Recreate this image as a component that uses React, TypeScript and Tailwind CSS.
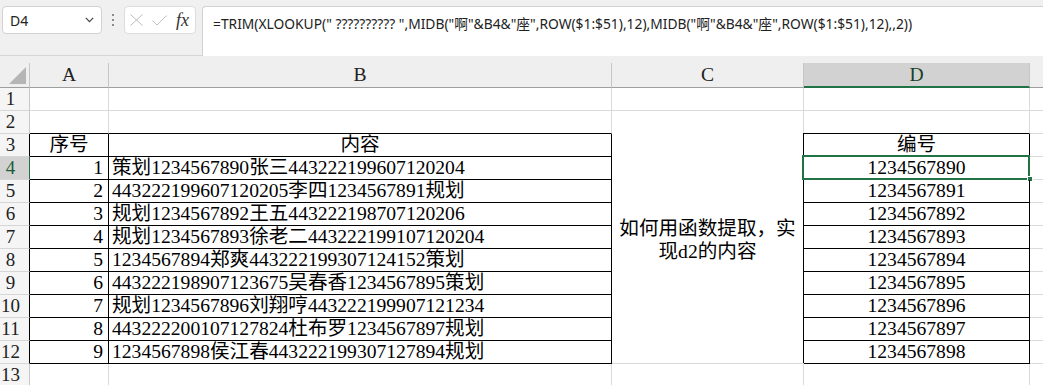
import React from "react";

const GRAY = "border-[#dadada]";
const cellFont = { fontFamily: '"Liberation Serif", "Noto Sans CJK SC", serif' };

const bTexts = [
  "策划1234567890张三443222199607120204",
  "443222199607120205李四1234567891规划",
  "规划1234567892王五443222198707120206",
  "规划1234567893徐老二443222199107120204",
  "1234567894郑爽443222199307124152策划",
  "443222198907123675吴春香1234567895策划",
  "规划1234567896刘翔哼443222199907121234",
  "443222200107127824杜布罗1234567897规划",
  "1234567898侯江春443222199307127894规划",
];

function FormulaBar() {
  return (
    <div
      className="h-[56px] bg-[#f0f0f0] border-b border-[#d6d6d6] flex items-start pt-[6px]"
      style={{ fontFamily: '"Noto Sans", "Noto Sans CJK SC", sans-serif' }}
    >
      <div className="ml-[2px] w-[100px] h-[28px] bg-white border border-[#d1d1d1] rounded-[4px] flex items-center justify-between pl-[7px] pr-[7px]">
        <span className="text-[14px] text-[#222]">D4</span>
        <svg width="9" height="6" viewBox="0 0 9 6" fill="none">
          <path d="M0.8 0.8 L4.5 4.6 L8.2 0.8" stroke="#444" strokeWidth="1.2" />
        </svg>
      </div>
      <div className="w-[22px] h-[28px] flex flex-col items-center justify-center gap-[3px]">
        <div className="w-[2px] h-[2px] bg-[#8a8a8a]" />
        <div className="w-[2px] h-[2px] bg-[#8a8a8a]" />
        <div className="w-[2px] h-[2px] bg-[#8a8a8a]" />
      </div>
      <div className="w-[72px] h-[28px] bg-white border border-[#dcdcdc] rounded-[4px] flex items-center pl-[5px]">
        <svg width="13" height="12" viewBox="0 0 13 12" fill="none">
          <path d="M0.5 0.5 L12.5 11.5 M12.5 0.5 L0.5 11.5" stroke="#bdbdbd" strokeWidth="1" />
        </svg>
        <svg className="ml-[9px]" width="15" height="11" viewBox="0 0 15 11" fill="none">
          <path d="M0.5 5.5 L5 10 L14.5 0.5" stroke="#bdbdbd" strokeWidth="1" />
        </svg>
        <span
          className="ml-[9px] text-[18px] italic text-[#333] leading-none"
          style={{ fontFamily: '"Liberation Serif", serif' }}
        >
          fx
        </span>
      </div>
      <div className="ml-[6px] flex-1 h-[50px] bg-white border-l border-t border-[#d1d1d1] rounded-tl-[4px] pl-[10px] pt-[4px]">
        <span className="text-[13.8px] text-[#222] whitespace-nowrap leading-[20px]">
          =TRIM(XLOOKUP(" ?????????? ",MIDB("啊"&B4&"座",ROW($1:$51),12),MIDB("啊"&B4&"座",ROW($1:$51),12),,2))
        </span>
      </div>
    </div>
  );
}

function ColHeader() {
  const cols = ["A", "B", "C"];
  return (
    <div className="bg-[#efefef] pt-[7px]">
      <div className="grid grid-cols-[30px_79px_503px_192px_226px_13px] h-[25px]" style={cellFont}>
        <div className="border-r border-b border-r-[#c6c6c6] border-b-[#9e9e9e] flex items-end justify-end pr-[3px] pb-[3px]">
          <svg width="17" height="17" viewBox="0 0 17 17">
            <path d="M17 0 L17 17 L0 17 Z" fill="#b5b5b5" />
          </svg>
        </div>
        {cols.map((c) => (
          <div
            key={c}
            className="border-r border-b border-r-[#c6c6c6] border-b-[#9e9e9e] flex items-center justify-center text-[19.6px] text-[#222] leading-[22px]"
          >
            {c}
          </div>
        ))}
        <div className="bg-[#d2d2d2] border-r border-r-[#c6c6c6] border-b-2 border-b-[#217346] flex items-center justify-center text-[19.6px] text-[#173f28] leading-[22px] pt-[1px]">
          D
        </div>
        <div className="border-b border-b-[#9e9e9e]" />
      </div>
    </div>
  );
}

function Body() {
  const cells: React.ReactNode[] = [];
  for (let r = 1; r <= 13; r++) {
    const inTable = r >= 3 && r <= 12;
    const topLine = r >= 2 && r <= 12;
    const hdrBorder =
      r === 4 ? "border-r-[#217346]" : inTable ? "border-r-black" : "border-r-[#c6c6c6]";
    cells.push(
      <div
        key={`h${r}`}
        className={`border-r border-b border-b-[#d6d6d6] ${hdrBorder} ${
          r === 4 ? "bg-[#d2d2d2] text-[#1d5e3a]" : "bg-[#f5f5f5] text-[#222]"
        } flex items-center justify-center pr-[8px] text-[19px] leading-[22px]`}
      >
        {r}
      </div>
    );
    const bb = topLine ? "border-b-black" : "border-b-[#dadada]";
    const br = inTable ? "border-r-black" : "border-r-[#dadada]";
    let aContent: React.ReactNode = null;
    let bContent: React.ReactNode = null;
    let dContent: React.ReactNode = null;
    if (r === 3) {
      aContent = "序号";
      bContent = "内容";
      dContent = "编号";
    } else if (r >= 4 && r <= 12) {
      aContent = String(r - 3);
      bContent = bTexts[r - 4];
      dContent = "12345678" + String(90 + r - 4);
    }
    cells.push(
      <div
        key={`a${r}`}
        className={`border-r border-b ${bb} ${br} flex items-center ${
          r === 3 ? "justify-center" : "justify-end pr-[5px]"
        } whitespace-nowrap`}
      >
        {aContent}
      </div>
    );
    cells.push(
      <div
        key={`b${r}`}
        className={`border-r border-b ${bb} ${br} flex items-center ${
          r === 3 ? "justify-center" : "justify-start pl-[3px]"
        } whitespace-nowrap overflow-hidden`}
      >
        {bContent}
      </div>
    );
    if (r === 1 || r === 13) {
      cells.push(<div key={`c${r}`} className={`border-r border-b ${GRAY}`} />);
    } else if (r === 2) {
      cells.push(
        <div key="cm" className={`row-span-11 border-b ${GRAY} flex`}>
          <div className="flex-1 flex flex-col items-center justify-center pt-[5px] leading-[23px] text-center">
            <div>如何用函数提取，实</div>
            <div>现d2的内容</div>
          </div>
          <div className="w-px flex flex-col">
            <div className="h-[22px] bg-[#dadada]" />
            <div className="flex-1 bg-black" />
          </div>
        </div>
      );
    }
    cells.push(
      <div
        key={`d${r}`}
        className={`relative border-r border-b ${bb} ${br} flex items-center justify-center whitespace-nowrap`}
      >
        {dContent}
        {r === 4 && (
          <>
            <div className="absolute left-[-2px] top-[-2px] w-[228px] h-[25px] border-2 border-[#217346]" />
            <div className="absolute left-[223px] top-[19px] w-[6px] h-[6px] bg-[#217346] border border-white" />
          </>
        )}
      </div>
    );
    cells.push(<div key={`e${r}`} className={`border-b ${GRAY}`} />);
  }
  return (
    <div
      className="grid grid-cols-[30px_79px_503px_192px_226px_13px] auto-rows-[23px] text-[19.6px] leading-[22px] text-black"
      style={cellFont}
    >
      {cells}
    </div>
  );
}

export default function App() {
  return (
    <div className="w-[1043px] h-[385px] overflow-hidden bg-white">
      <FormulaBar />
      <ColHeader />
      <Body />
    </div>
  );
}
